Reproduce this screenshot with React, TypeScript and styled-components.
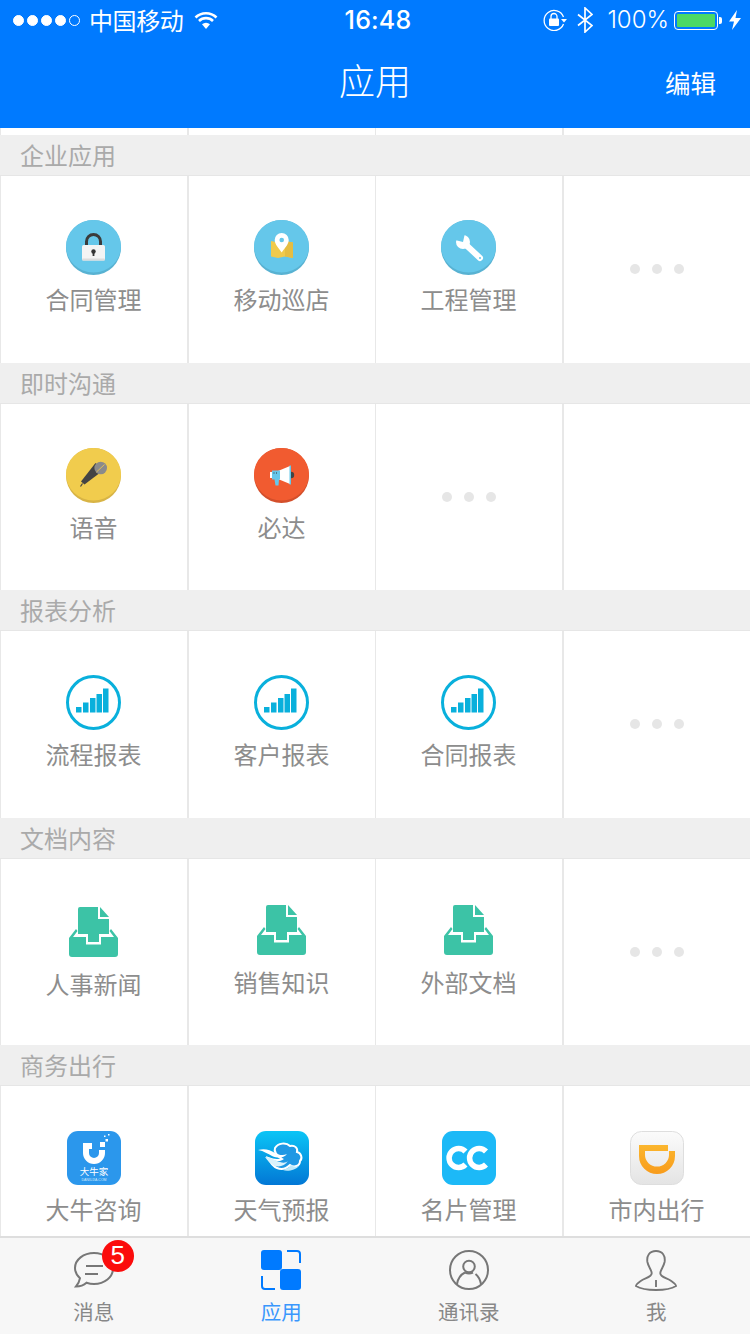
import React from "react";
import styled, { createGlobalStyle } from "styled-components";

const GlobalStyle = createGlobalStyle`
  html, body {
    margin: 0;
    padding: 0;
    background: #fff;
  }
  * {
    box-sizing: border-box;
  }
`;

const Page = styled.div`
  width: 750px;
  height: 1334px;
  display: flex;
  flex-direction: column;
  overflow: hidden;
  font-family: "Noto Sans CJK SC", "Noto Sans", sans-serif;
`;

const TopArea = styled.header`
  flex: none;
  height: 128px;
  background: #007aff;
  color: #fff;
`;

const StatusBar = styled.div`
  height: 40px;
  padding: 0 9px 0 13px;
  display: grid;
  grid-template-columns: 1fr auto 1fr;
  align-items: center;
`;

const StatusSide = styled.div<{ $end?: boolean }>`
  display: flex;
  align-items: center;
  justify-content: ${(p) => (p.$end ? "flex-end" : "flex-start")};
`;

const Signal = styled.div`
  display: flex;
  gap: 3px;
  margin-right: 9px;
`;

const SignalDot = styled.span<{ $on: boolean }>`
  width: 11px;
  height: 11px;
  border-radius: 50%;
  border: 1px solid #fff;
  background: ${(p) => (p.$on ? "#fff" : "transparent")};
`;

const Carrier = styled.span`
  font-size: 24px;
  line-height: 40px;
  letter-spacing: -0.4px;
  margin-right: 11px;
`;

const Clock = styled.span`
  font-family: Inter, "Liberation Sans", sans-serif;
  font-size: 25px;
  font-weight: 500;
  line-height: 40px;
  letter-spacing: 0.2px;
  margin-left: 2px;
`;

const Percent = styled.span`
  font-family: Inter, "Liberation Sans", sans-serif;
  font-size: 24px;
  font-weight: 300;
  line-height: 40px;
  margin: 0 5px 0 14px;
`;

const Battery = styled.div`
  width: 44px;
  height: 19px;
  padding: 2px;
  border: 1px solid #fff;
  border-radius: 4px;
  margin-right: 4px;
  position: relative;
  &::after {
    content: "";
    position: absolute;
    right: -5px;
    top: 5px;
    width: 3px;
    height: 7px;
    border-radius: 0 2px 2px 0;
    background: #fff;
  }
`;

const BatteryFill = styled.div`
  height: 100%;
  background: #4cd964;
  border-radius: 1px;
`;

const NavBar = styled.div`
  height: 88px;
  padding: 0 34px 11px 34px;
  display: grid;
  grid-template-columns: 1fr auto 1fr;
  align-items: center;
`;

const NavTitle = styled.div`
  font-size: 36px;
  font-weight: 300;
  line-height: 48px;
`;

const NavAction = styled.div`
  justify-self: end;
  font-size: 25.5px;
  line-height: 36px;
  padding-top: 7px;
`;

const Scroll = styled.main`
  flex: 1;
  min-height: 0;
  overflow: hidden;
  background: #fff;
`;

const Grid = styled.div<{ $h?: number }>`
  display: grid;
  grid-template-columns: 187px 188px 187px 188px;
  ${(p) => (p.$h ? `height: ${p.$h}px;` : "flex: 1;")}
`;

const Section = styled.section`
  height: 227.5px;
  display: flex;
  flex-direction: column;
`;

const SectionTitle = styled.h2`
  flex: none;
  margin: 0;
  height: 41px;
  padding: 0 0 0 20px;
  background: #efefef;
  border-bottom: 1px solid #e6e6e6;
  color: #aaa;
  font-size: 24px;
  font-weight: 400;
  line-height: 39px;
`;

const Cell = styled.div<{ $pad?: number }>`
  border-left: 1px solid #e8e8e8;
  padding-top: ${(p) => p.$pad ?? 44}px;
  padding-right: 1px;
  display: flex;
  flex-direction: column;
  align-items: center;
  &:nth-child(even) {
    border-left-width: 2px;
  }
`;

const MoreCell = styled(Cell)`
  padding-top: 0;
  padding-right: 0;
  flex-direction: row;
  justify-content: center;
  gap: 12px;
`;

const MoreDot = styled.span`
  width: 10px;
  height: 10px;
  border-radius: 50%;
  background: #e6e6e6;
`;

const IconBox = styled.div`
  height: 55px;
  display: flex;
  align-items: center;
  justify-content: center;
`;

const CellLabel = styled.div`
  margin-top: 7px;
  font-size: 24px;
  line-height: 34px;
  color: #8d8d8d;
  white-space: nowrap;
`;

const TabBar = styled.nav`
  flex: none;
  height: 98px;
  background: #f7f7f7;
  border-top: 2px solid #dedede;
  display: grid;
  grid-template-columns: repeat(4, 1fr);
`;

const Tab = styled.div`
  padding-top: 12px;
  display: flex;
  flex-direction: column;
  align-items: center;
  gap: 7px;
`;

const TabIcon = styled.div`
  position: relative;
  height: 40px;
  display: flex;
  align-items: center;
  justify-content: center;
`;

const TabLabel = styled.div<{ $active?: boolean }>`
  font-size: 20.5px;
  line-height: 28px;
  color: ${(p) => (p.$active ? "#3a97fd" : "#888")};
`;

const Badge = styled.span`
  position: absolute;
  left: 29px;
  top: -10px;
  width: 32px;
  height: 32px;
  border-radius: 50%;
  background: #fb0c0c;
  color: #fff;
  font-family: "Liberation Sans", sans-serif;
  font-size: 26px;
  line-height: 31px;
  text-align: center;
`;

const Coin = ({ base, edge, children }: { base: string; edge: string; children: React.ReactNode }) => (
  <svg width="55" height="55" viewBox="0 0 55 55">
    <circle cx="27.5" cy="27.5" r="27.5" fill={edge} />
    <ellipse cx="27.5" cy="26.2" rx="27.5" ry="26.2" fill={base} />
    {children}
  </svg>
);

const LockIcon = () => (
  <Coin base="#65c7ea" edge="#58b2d2">
    <path d="M20.5 26v-4.500a7 7 0 0 1 14 0V26" fill="none" stroke="#3b3b3b" strokeWidth="3" />
    <rect x="16" y="25" width="23" height="15.5" rx="1.5" fill="#f4f4f4" />
    <rect x="16" y="38.5" width="23" height="2" rx="1" fill="#dcdcdc" />
    <circle cx="27.5" cy="31.5" r="2.2" fill="#333" />
    <rect x="26.6" y="32" width="1.8" height="4" fill="#333" />
  </Coin>
);

const MapIcon = () => (
  <Coin base="#65c7ea" edge="#58b2d2">
    <path d="M17 21l7 1.5 7-1.500 8 1.500v15.500l-8-1.500-7 1.500-7-1.500z" fill="#f0ca4c" />
    <path d="M31 21l8 1.5v15.500l-8-1.500z" fill="#e5bd42" />
    <path d="M27.7 13a7 7 0 0 1 7 7c0 4.500-4.500 8.500-7 12.500-2.500-4-7-8-7-12.500a7 7 0 0 1 7-7z" fill="#fff" />
    <circle cx="27.7" cy="20" r="2.3" fill="#65c7ea" />
  </Coin>
);

const WrenchIcon = () => (
  <Coin base="#65c7ea" edge="#58b2d2">
    <path d="M24 24l15 14" stroke="#fff" strokeWidth="6" strokeLinecap="round" />
    <circle cx="22" cy="22" r="7" fill="#fff" />
    <path d="M22 22l-8-2 4-8 6 1z" fill="#65c7ea" />
    <circle cx="39" cy="38" r="1" fill="#65c7ea" />
  </Coin>
);

const MicIcon = () => (
  <Coin base="#f1cc4d" edge="#d8b445">
    <path d="M29.5 15l7.5 7.500-18.500 14-3.500-3z" fill="#444" />
    <path d="M16.5 35.500l-2 3" stroke="#444" strokeWidth="1.2" />
    <circle cx="34.7" cy="20" r="6.3" fill="#8b8b8b" />
    <path d="M30.5 24l8-7.500" stroke="#f1cc4d" strokeWidth="0.8" />
  </Coin>
);

const HornIcon = () => (
  <Coin base="#f15b30" edge="#d34f2b">
    <circle cx="37" cy="27" r="3.2" fill="#444" />
    <path d="M24 23l12-5v18l-12-5z" fill="#fff" />
    <rect x="35.5" y="17.5" width="1.5" height="19" fill="#65c7ea" />
    <rect x="16" y="24" width="2" height="6" fill="#fff" />
    <path d="M18 22.500h8v9h-1l-.5 6h-3l-1-6h-2.500z" fill="#65c7ea" />
    <rect x="19.5" y="24.5" width="1" height="1" fill="#333" />
    <rect x="22" y="24.5" width="1" height="1" fill="#333" />
  </Coin>
);

const ReportIcon = () => (
  <svg width="55" height="55" viewBox="0 0 55 55">
    <circle cx="27.5" cy="27.5" r="26" fill="none" stroke="#09b0dc" strokeWidth="3" />
    {[
      [10, 32, 5.5],
      [17, 27.5, 10],
      [24, 23, 14.5],
      [30.5, 19, 18.5],
      [37, 13.5, 24],
    ].map(([x, y, h]) => (
      <rect key={x} x={x} y={y} width="5.5" height={h} fill="#09b0dc" />
    ))}
  </svg>
);

const DocIcon = () => (
  <svg width="49" height="50" viewBox="0 0 49 50">
    <path d="M11 0H29V12H40V27H30V35H19V27H9V2a2 2 0 0 1 2-2z" fill="#3cc3a6" />
    <path d="M31 0l9 10h-9z" fill="#3cc3a6" />
    <path
      d="M0 31L7 22l1.500 2L4 30H17V37.500H32V30H45L40.500 24l1.500-2 7 9V47a3 3 0 0 1-3 3H3a3 3 0 0 1-3-3z"
      fill="#3cc3a6"
    />
  </svg>
);

const DaniuIcon = () => (
  <svg width="54" height="54" viewBox="0 0 54 54">
    <rect width="54" height="54" rx="11" fill="#2b97ec" />
    <path d="M16 15h9M19 13v9a8 8 0 0 0 16 0v-3" fill="none" stroke="#fff" strokeWidth="6" />
    <rect x="33" y="11" width="5" height="5" fill="#fff" />
    <rect x="38.5" y="8" width="2.5" height="2.5" fill="#fff" />
    <rect x="37" y="4.5" width="1.5" height="1.5" fill="#fff" />
    <rect x="41" y="3" width="1.5" height="1.5" fill="#fff" />
    <text x="27" y="44" textAnchor="middle" fontSize="9.5" fill="#fff" fontFamily="Noto Sans CJK SC">
      大牛家
    </text>
    <text x="27" y="49.5" textAnchor="middle" fontSize="3.5" fill="#d5eafb" fontFamily="Liberation Sans">
      DANIUJIA.COM
    </text>
  </svg>
);

const WeatherIcon = () => (
  <svg width="54" height="54" viewBox="0 0 54 54">
    <defs>
      <linearGradient id="sky" x1="0" y1="0" x2="0" y2="1">
        <stop offset="0" stopColor="#0bc5f6" />
        <stop offset="1" stopColor="#0277d5" />
      </linearGradient>
    </defs>
    <rect width="54" height="54" rx="11" fill="url(#sky)" />
    <path
      d="M20 17c3-5 11-6 15-2 5-1 8 2 7 6 4 1 6 6 3 9 0 5-6 7-10 4-3 3-8 5-13 3-5-2-7-6-9-10 5 2 10 3 14 1-3-2-9-6-7-11z"
      fill="#1f98e4"
      stroke="#fff"
      strokeWidth="2"
    />
    <path d="M3 19c7-2 12 0 17 3 4 2 8 3 12 1-4 5-10 4-15 2-4-2-8-5-14-6z" fill="#fff" />
    <path d="M10 26c6 0 10 4 15 5 3 1 6 1 8-1-3 5-10 7-15 4-3-2-6-5-8-8z" fill="#d9f2fc" />
    <path d="M28 39c4-1 6-3 8-5 2 2 5 2 8 1-3 4-12 6-16 4z" fill="#bfe9fa" />
  </svg>
);

const CardIcon = () => (
  <svg width="54" height="54" viewBox="0 0 54 54">
    <rect width="54" height="54" rx="11" fill="#1cb9f7" />
    <path d="M23.5 20.500a9.500 9.500 0 1 0 0 13" fill="none" stroke="#fff" strokeWidth="5.5" />
    <path d="M44 20.500a9.500 9.500 0 1 0 0 13" fill="none" stroke="#fff" strokeWidth="5.5" />
  </svg>
);

const DidiIcon = () => (
  <svg width="54" height="54" viewBox="0 0 54 54">
    <defs>
      <linearGradient id="didi" x1="0" y1="0" x2="0" y2="1">
        <stop offset="0" stopColor="#fbfbfb" />
        <stop offset="1" stopColor="#e4e4e4" />
      </linearGradient>
      <linearGradient id="didiMark" x1="0" y1="0" x2="0" y2="1">
        <stop offset="0" stopColor="#fbb62e" />
        <stop offset="1" stopColor="#f89c1c" />
      </linearGradient>
    </defs>
    <rect x="0.5" y="0.5" width="53" height="53" rx="11" fill="url(#didi)" stroke="#dedede" />
    <path
      fillRule="evenodd"
      d="M9 14H38V20H45V25A18 18 0 0 1 9 25ZM15 20V24A12 11.500 0 0 0 39 24V20Z"
      fill="url(#didiMark)"
    />
  </svg>
);

const ChatIcon = () => (
  <svg width="42" height="38" viewBox="0 0 42 38">
    <path
      d="M21 2C10.500 2 2 8.700 2 17c0 4 2 7.500 5 10.200-.5 3-2 6-4 8.300 4 0 8-1.500 10.500-3.800 2.300.8 4.900 1.300 7.500 1.300 10.500 0 19-6.800 19-15.500S31.500 2 21 2z"
      fill="none"
      stroke="#777"
      strokeWidth="2"
    />
    <path d="M13 15h17M12 23h13" stroke="#777" strokeWidth="2" />
  </svg>
);

const AppsIcon = () => (
  <svg width="40" height="40" viewBox="0 0 40 40">
    <rect x="0" y="0" width="21" height="20" rx="3" fill="#007aff" />
    <rect x="19" y="19" width="21" height="21" rx="3" fill="#007aff" />
    <path d="M26 1h10a3 3 0 0 1 3 3v9" fill="none" stroke="#007aff" strokeWidth="2" />
    <path d="M1 26v10a3 3 0 0 0 3 3h10" fill="none" stroke="#007aff" strokeWidth="2" />
  </svg>
);

const ContactIcon = () => (
  <svg width="40" height="40" viewBox="0 0 40 40">
    <circle cx="20" cy="20" r="19" fill="none" stroke="#777" strokeWidth="2" />
    <circle cx="20" cy="16.5" r="5.8" fill="none" stroke="#777" strokeWidth="2" />
    <path d="M8 34c1-6 5-10 8-11.500M32 34c-1-5-3-8-5.500-10" fill="none" stroke="#777" strokeWidth="2" />
    <path d="M16 22.500c2.500 1.200 5.500 1.200 8 0" fill="none" stroke="#777" strokeWidth="2" />
  </svg>
);

const MeIcon = () => (
  <svg width="42" height="41" viewBox="0 0 44 41" preserveAspectRatio="none">
    <path
      d="M22 1C15 1 12 6 13 12c1 5 4 7 4.500 11 .5 4-7 5-11.500 8-3 2-5 4-5 5 5 3 13 4 21 4s16-1 21-4c0-1-2-3-5-5-4.500-3-12-4-11.500-8 .5-4 3.500-6 4.500-11C32 6 29 1 22 1z"
      fill="none"
      stroke="#777"
      strokeWidth="2"
    />
    <path d="M22 30v7" stroke="#777" strokeWidth="2" />
  </svg>
);

const WifiIcon = () => (
  <svg width="24" height="18" viewBox="0 0 24 18" style={{ display: "block" }}>
    <path d="M1.500 6.500a15 15 0 0 1 21 0M5 10a10 10 0 0 1 14 0" fill="none" stroke="#fff" strokeWidth="2.6" />
    <path d="M8 13.200a6 6 0 0 1 8 0L12 18z" fill="#fff" />
  </svg>
);

const RotationIcon = () => (
  <svg width="24" height="22" viewBox="0 0 24 22" style={{ display: "block", marginRight: 10 }}>
    <path d="M20.500 8A10 10 0 1 0 20.500 15" fill="none" stroke="#fff" strokeWidth="1.3" />
    <path d="M18 10h6l-3 3.500z" fill="#fff" />
    <rect x="6" y="9.500" width="10" height="7.5" rx="1" fill="#fff" />
    <path d="M8 10V7.500a3 3 0 0 1 6 0V10" fill="none" stroke="#fff" strokeWidth="1.3" />
  </svg>
);

const BluetoothIcon = () => (
  <svg width="16" height="26" viewBox="0 0 16 26" style={{ display: "block" }}>
    <path d="M1 7.500l14 11-7 6.500V1l7 6.500-14 11" fill="none" stroke="#fff" strokeWidth="1.7" />
  </svg>
);

const BoltIcon = () => (
  <svg width="12" height="20" viewBox="0 0 12 20" style={{ display: "block", marginLeft: 7 }}>
    <path d="M8 0L0 11.500h5L3 20l9-12H6.500z" fill="#fff" />
  </svg>
);

type Item = { label: string; icon: React.ReactNode; pad?: number };

const sections: { title: string; items: Item[]; more: boolean }[] = [
  {
    title: "企业应用",
    more: true,
    items: [
      { label: "合同管理", icon: <LockIcon /> },
      { label: "移动巡店", icon: <MapIcon /> },
      { label: "工程管理", icon: <WrenchIcon /> },
    ],
  },
  {
    title: "即时沟通",
    more: true,
    items: [
      { label: "语音", icon: <MicIcon /> },
      { label: "必达", icon: <HornIcon /> },
    ],
  },
  {
    title: "报表分析",
    more: true,
    items: [
      { label: "流程报表", icon: <ReportIcon /> },
      { label: "客户报表", icon: <ReportIcon /> },
      { label: "合同报表", icon: <ReportIcon /> },
    ],
  },
  {
    title: "文档内容",
    more: true,
    items: [
      { label: "人事新闻", icon: <DocIcon />, pad: 46 },
      { label: "销售知识", icon: <DocIcon /> },
      { label: "外部文档", icon: <DocIcon /> },
    ],
  },
  {
    title: "商务出行",
    more: false,
    items: [
      { label: "大牛咨询", icon: <DaniuIcon /> },
      { label: "天气预报", icon: <WeatherIcon /> },
      { label: "名片管理", icon: <CardIcon /> },
      { label: "市内出行", icon: <DidiIcon /> },
    ],
  },
];

const App = () => {
  return (
    <Page>
      <GlobalStyle />
      <TopArea>
        <StatusBar>
          <StatusSide>
            <Signal>
              {[1, 2, 3, 4, 5].map((n) => (
                <SignalDot key={n} $on={n < 5} />
              ))}
            </Signal>
            <Carrier>中国移动</Carrier>
            <WifiIcon />
          </StatusSide>
          <Clock>16:48</Clock>
          <StatusSide $end>
            <RotationIcon />
            <BluetoothIcon />
            <Percent>100%</Percent>
            <Battery>
              <BatteryFill />
            </Battery>
            <BoltIcon />
          </StatusSide>
        </StatusBar>
        <NavBar>
          <span />
          <NavTitle>应用</NavTitle>
          <NavAction>编辑</NavAction>
        </NavBar>
      </TopArea>
      <Scroll>
        <Grid $h={7}>
          <Cell />
          <Cell />
          <Cell />
          <Cell />
        </Grid>
        {sections.map((section) => (
          <Section key={section.title}>
            <SectionTitle>{section.title}</SectionTitle>
            <Grid>
              {section.items.map((item) => (
                <Cell key={item.label} $pad={item.pad}>
                  <IconBox>{item.icon}</IconBox>
                  <CellLabel>{item.label}</CellLabel>
                </Cell>
              ))}
              {section.more && (
                <MoreCell>
                  <MoreDot />
                  <MoreDot />
                  <MoreDot />
                </MoreCell>
              )}
              {section.items.length === 2 && <Cell />}
            </Grid>
          </Section>
        ))}
      </Scroll>
      <TabBar>
        <Tab>
          <TabIcon>
            <ChatIcon />
            <Badge>5</Badge>
          </TabIcon>
          <TabLabel>消息</TabLabel>
        </Tab>
        <Tab>
          <TabIcon>
            <AppsIcon />
          </TabIcon>
          <TabLabel $active>应用</TabLabel>
        </Tab>
        <Tab>
          <TabIcon>
            <ContactIcon />
          </TabIcon>
          <TabLabel>通讯录</TabLabel>
        </Tab>
        <Tab>
          <TabIcon>
            <MeIcon />
          </TabIcon>
          <TabLabel>我</TabLabel>
        </Tab>
      </TabBar>
    </Page>
  );
};

export default App;
